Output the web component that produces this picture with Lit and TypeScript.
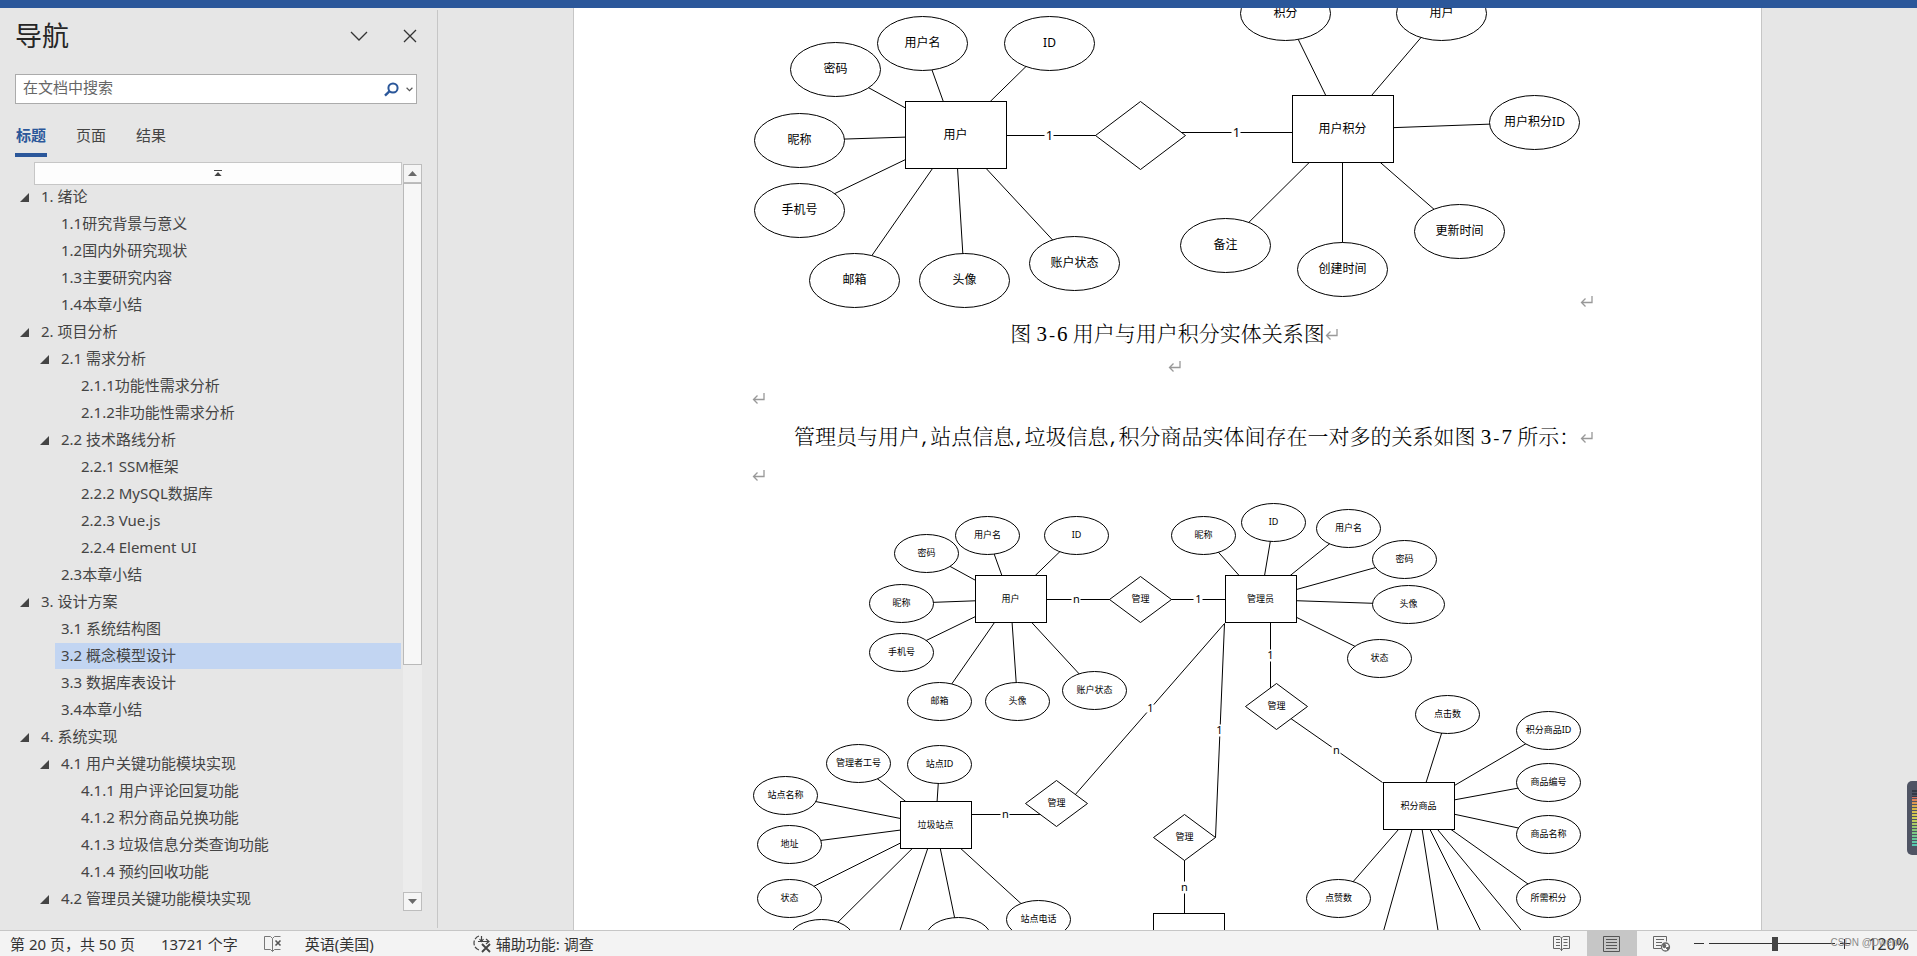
import { LitElement, html, svg, css, nothing } from "lit";
import { customElement, property, state } from "lit/decorators.js";
import { classMap } from "lit/directives/class-map.js";

type Point = [number, number];
interface Shape { kind: "oval" | "box" | "rhomb"; at: Point; text?: string; wide?: boolean }
interface Diagram {
  view: string;
  width: number;
  height: number;
  oval: Point;
  box: Point;
  rhomb: Point;
  shapes: Shape[];
  edges: [Point, Point][];
  marks: { at: Point; text: string; h?: number }[];
}

const oval = (x: number, y: number, text = "", wide = false): Shape => ({ kind: "oval", at: [x, y], text, wide });
const box = (x: number, y: number, text = ""): Shape => ({ kind: "box", at: [x, y], text });
const rhomb = (x: number, y: number, text = ""): Shape => ({ kind: "rhomb", at: [x, y], text });
const spokes = (center: Point, ovals: Shape[]): [Point, Point][] => ovals.map((o) => [center, o.at]);

const userAttrs = [
  oval(836, 69, "密码"), oval(923, 43, "用户名"), oval(1050, 43, "ID"), oval(800, 140, "昵称"),
  oval(800, 210, "手机号"), oval(855, 280, "邮箱"), oval(965, 280, "头像"), oval(1075, 263, "账户状态"),
];
const pointAttrs = [
  oval(1286, 13, "积分"), oval(1442, 13, "用户"), oval(1535, 122, "用户积分ID"),
  oval(1460, 231, "更新时间"), oval(1343, 269, "创建时间"), oval(1226, 245, "备注"),
];
const pointsDiagram: Diagram = {
  view: "753 8 828 300", width: 828, height: 300,
  oval: [45, 27], box: [101, 67], rhomb: [45, 34],
  shapes: [...userAttrs, ...pointAttrs, box(956, 135, "用户"), rhomb(1141, 135), box(1343, 129, "用户积分")],
  edges: [
    ...spokes([956, 135], userAttrs), ...spokes([1343, 129], pointAttrs),
    [[956, 135], [1141, 135]], [[1160, 132], [1343, 132]],
  ],
  marks: [{ at: [1050, 135], text: "1" }, { at: [1237, 132], text: "1" }],
};

const memberAttrs = [
  oval(988, 535, "用户名"), oval(1077, 535, "ID"), oval(927, 553, "密码"), oval(902, 603, "昵称"),
  oval(902, 652, "手机号"), oval(940, 701, "邮箱"), oval(1018, 701, "头像"), oval(1095, 690, "账户状态"),
];
const adminAttrs = [
  oval(1204, 535, "昵称"), oval(1274, 522, "ID"), oval(1349, 528, "用户名"), oval(1405, 559, "密码"),
  oval(1409, 604, "头像", true), oval(1380, 658, "状态"),
];
const goodsAttrs = [
  oval(1448, 714, "点击数"), oval(1549, 730, "积分商品ID"), oval(1549, 782, "商品编号"),
  oval(1549, 834, "商品名称"), oval(1549, 898, "所需积分"), oval(1339, 898, "点赞数"),
];
const siteAttrs = [
  oval(859, 763, "管理者工号"), oval(940, 764, "站点ID"), oval(786, 795, "站点名称"), oval(790, 844, "地址"),
  oval(790, 898, "状态"), oval(822, 938), oval(959, 936), oval(1039, 919, "站点电话"),
];
const adminDiagram: Diagram = {
  view: "753 492 828 460", width: 828, height: 460,
  oval: [32, 19], box: [71, 47], rhomb: [31, 23],
  shapes: [
    ...memberAttrs, ...adminAttrs, ...goodsAttrs, ...siteAttrs,
    box(1011, 599, "用户"), box(1261, 599, "管理员"), box(1419, 806, "积分商品"), box(936, 825, "垃圾站点"),
    box(1189, 937), rhomb(1141, 599, "管理"), rhomb(1277, 706, "管理"), rhomb(1057, 803, "管理"), rhomb(1185, 837, "管理"),
  ],
  edges: [
    ...spokes([1011, 599], memberAttrs), ...spokes([1261, 599], adminAttrs),
    ...spokes([1419, 806], goodsAttrs), ...spokes([936, 825], siteAttrs),
    [[1419, 806], [1378, 952]], [[1419, 806], [1442, 952]], [[1419, 806], [1492, 952]], [[1419, 806], [1540, 952]],
    [[936, 825], [893, 952]],
    [[1011, 599], [1141, 599]], [[1141, 599], [1261, 599]],
    [[1271, 599], [1271, 700]], [[1277, 708], [1383, 782]],
    [[1225, 623], [1068, 803]], [[1225, 623], [1216, 837]],
    [[936, 814], [1057, 814]], [[1185, 837], [1185, 937]],
  ],
  marks: [
    { at: [1077, 599], text: "n" }, { at: [1199, 599], text: "1" }, { at: [1151, 708], text: "1" },
    { at: [1220, 730], text: "1", h: 12 }, { at: [1271, 655], text: "1", h: 12 }, { at: [1337, 750], text: "n" },
    { at: [1006, 814], text: "n" }, { at: [1185, 887], text: "n", h: 12 },
  ],
};

@customElement("er-diagram")
class ErDiagram extends LitElement {
  @property({ attribute: false }) data!: Diagram;
  @property({ type: Boolean, reflect: true }) small = false;

  static styles = css`
    :host { display: block; font: 400 12px/16px "Noto Sans", "Noto Sans CJK SC", sans-serif; }
    :host([small]) { font-size: 9px; }
    svg { display: block; max-width: 100%; height: auto; overflow: visible; }
    .line { stroke: #000; stroke-width: 1; }
    .shape { fill: #fff; stroke: #000; stroke-width: 1; }
    .gap { fill: #fff; }
    .label { text-anchor: middle; dominant-baseline: central; fill: #000; }
    .mark { font-size: 13px; }
    :host([small]) .mark { font-size: 11px; }
  `;

  private shape(s: Shape) {
    const d = this.data;
    const [x, y] = s.at;
    let figure;
    if (s.kind === "oval") {
      figure = svg`<ellipse class="shape" cx=${x} cy=${y} rx=${s.wide ? d.oval[0] + 4 : d.oval[0]} ry=${d.oval[1]} />`;
    } else if (s.kind === "box") {
      const [w, h] = d.box;
      figure = svg`<rect class="shape" x=${x - (w - 1) / 2} y=${y - (h + 1) / 2} width=${w} height=${h} />`;
    } else {
      const [w, h] = d.rhomb;
      figure = svg`<polygon class="shape" points="${x - w},${y} ${x},${y - h} ${x + w},${y} ${x},${y + h}" />`;
    }
    return svg`${figure}${s.text ? svg`<text class="label" x=${x} y=${y - 1}>${s.text}</text>` : nothing}`;
  }

  render() {
    const d = this.data;
    return html`
      <svg viewBox=${d.view} width=${d.width} height=${d.height} role="img" aria-label="实体关系图">
        <g transform="translate(0.5 0.5)">
          ${d.edges.map(([a, b]) => svg`<line class="line" x1=${a[0]} y1=${a[1]} x2=${b[0]} y2=${b[1]} />`)}
          ${d.shapes.map((s) => this.shape(s))}
          ${d.marks.map((m) => svg`
            <rect class="gap" x=${m.at[0] - 5} y=${m.at[1] - (m.h ?? 8) / 2} width="9" height=${m.h ?? 8} />
            <text class="label mark" x=${m.at[0]} y=${m.at[1] - 1}>${m.text}</text>`)}
        </g>
      </svg>`;
  }
}

interface Heading { level: number; text: string; open?: boolean }
const headings: Heading[] = [
  { level: 1, text: "1. 绪论", open: true },
  { level: 2, text: "1.1研究背景与意义" },
  { level: 2, text: "1.2国内外研究现状" },
  { level: 2, text: "1.3主要研究内容" },
  { level: 2, text: "1.4本章小结" },
  { level: 1, text: "2. 项目分析", open: true },
  { level: 2, text: "2.1 需求分析", open: true },
  { level: 3, text: "2.1.1功能性需求分析" },
  { level: 3, text: "2.1.2非功能性需求分析" },
  { level: 2, text: "2.2 技术路线分析", open: true },
  { level: 3, text: "2.2.1 SSM框架" },
  { level: 3, text: "2.2.2 MySQL数据库" },
  { level: 3, text: "2.2.3 Vue.js" },
  { level: 3, text: "2.2.4 Element UI" },
  { level: 2, text: "2.3本章小结" },
  { level: 1, text: "3. 设计方案", open: true },
  { level: 2, text: "3.1 系统结构图" },
  { level: 2, text: "3.2 概念模型设计" },
  { level: 2, text: "3.3 数据库表设计" },
  { level: 2, text: "3.4本章小结" },
  { level: 1, text: "4. 系统实现", open: true },
  { level: 2, text: "4.1 用户关键功能模块实现", open: true },
  { level: 3, text: "4.1.1 用户评论回复功能" },
  { level: 3, text: "4.1.2 积分商品兑换功能" },
  { level: 3, text: "4.1.3 垃圾信息分类查询功能" },
  { level: 3, text: "4.1.4 预约回收功能" },
  { level: 2, text: "4.2 管理员关键功能模块实现", open: true },
];

@customElement("nav-pane")
class NavPane extends LitElement {
  @state() private tab = "标题";
  @state() private current = 17;

  static styles = css`
    :host {
      display: flex; flex-direction: column; box-sizing: border-box; width: 438px; height: 100%;
      padding: 0 0 2px; color: #444;
      font: 15px/27px "Noto Sans", "Noto Sans CJK SC", sans-serif;
    }
    .inner { flex: 1; min-height: 0; display: flex; flex-direction: column; margin-top: 2px; border-right: 1px solid #c6c6c6; }
    button { font: inherit; color: inherit; background: none; border: 0; padding: 0; margin: 0; }
    svg { display: block; }
    .head { display: flex; align-items: center; box-sizing: border-box; padding: 4px 20px 0 15px; height: 48px; }
    h2 { flex: 1; margin: 0; font-size: 27px; line-height: 40px; font-weight: 400; color: #262626; }
    .head .tool { margin-left: 35px; color: #333; }
    .search { display: flex; align-items: center; height: 28px; margin: 16px 20px 0 15px; border: 1px solid #ababab; background: #fff; }
    .search input { flex: 1; min-width: 0; height: 26px; padding: 0 0 3px 7px; border: 0; outline: 0; background: none; font: inherit; color: #444; box-sizing: border-box; }
    .search input::placeholder { color: #666; opacity: 1; }
    .search .go { margin-right: 7px; }
    .search .more { margin-right: 3px; }
    .tabs { display: flex; gap: 28px; padding: 17px 15px 0; }
    .tab { box-sizing: border-box; width: 32px; height: 36px; padding-bottom: 4px; border-bottom: 4px solid transparent; line-height: 28px; white-space: nowrap; }
    .tab.on { color: #2b579a; font-weight: 700; border-color: #2b579a; }
    .outline { flex: 1; min-height: 0; display: flex; gap: 1px; margin: 5px 15px 17px 0; }
    .list { flex: 1; min-width: 0; overflow: hidden; }
    .top { display: flex; justify-content: center; align-items: center; box-sizing: border-box; width: calc(100% - 34px); height: 23px; margin-left: 34px; border: 1px solid #c6c6c6; background: #fdfdfd; color: #444; }
    ul { list-style: none; margin: -1px 0 0; padding: 0 1px 0 0; }
    li { display: flex; align-items: flex-start; height: 27px; }
    li.l1 { padding-left: 14px; }
    li.l2 { padding-left: 34px; }
    li.l3 { padding-left: 54px; }
    .fold { flex: none; display: flex; align-items: center; justify-content: center; width: 21px; height: 26px; color: #444; }
    .item { flex: 1; height: 26px; line-height: 25px; padding-left: 6px; color: inherit; text-decoration: none; white-space: nowrap; }
    .item.on { background: #c2d5f2; }
    .scroll { display: flex; flex-direction: column; width: 19px; margin-top: 2px; background: #ececec; box-sizing: border-box; }
    .arrow { box-sizing: border-box; height: 19px; flex: none; display: flex; align-items: center; justify-content: center; border: 1px solid #bdbdbd; background: #f5f5f5; color: #6a6a6a; }
    .track { flex: 1; }
    .thumb { box-sizing: border-box; height: 68%; border: 1px solid #b9b9b9; background: #f7f7f7; }
  `;

  render() {
    return html`
      <div class="inner">
        <div class="head">
          <h2>导航</h2>
          <button class="tool" aria-label="任务窗格选项"><svg width="18" height="10" fill="none" stroke="currentColor" stroke-width="1.3"><path d="M1 1l8 8 8-8" /></svg></button>
          <button class="tool" aria-label="关闭"><svg width="14" height="14" fill="none" stroke="currentColor" stroke-width="1.3"><path d="M1 1l12 12M13 1L1 13" /></svg></button>
        </div>
        <div class="search">
          <input type="text" aria-label="在文档中搜索" placeholder="在文档中搜索" />
          <button class="go" aria-label="搜索"><svg width="15" height="15" fill="none" stroke="#2b579a"><circle cx="9" cy="6" r="4.6" stroke-width="2" /><path d="M5.6 9.2L1 13.6" stroke-width="2.4" /></svg></button>
          <button class="more" aria-label="搜索选项"><svg width="7" height="5" fill="none" stroke="#555" stroke-width="1.2"><path d="M.6.8l2.9 2.8L6.4.8" /></svg></button>
        </div>
        <div class="tabs" role="tablist">
          ${["标题", "页面", "结果"].map((t) => html`
            <button role="tab" class=${classMap({ tab: true, on: t === this.tab })} @click=${() => (this.tab = t)}>${t}</button>`)}
        </div>
        <div class="outline">
          <div class="list">
            <button class="top" aria-label="跳转到文档开头"><svg width="8" height="7" fill="currentColor"><path d="M0 0h8v1H0zM4 2l3.6 4H.4z" /></svg></button>
            <ul>
              ${headings.map((h, i) => html`
                <li class="l${h.level}">
                  ${h.open
                    ? html`<button class="fold" aria-label="折叠"><svg width="9" height="9" fill="currentColor"><path d="M9 0v9H0z" /></svg></button>`
                    : html`<span class="fold"></span>`}
                  <a href="#h${i}" class=${classMap({ item: true, on: i === this.current })}
                    @click=${(e: Event) => { e.preventDefault(); this.current = i; }}>${h.text}</a>
                </li>`)}
            </ul>
          </div>
          <div class="scroll">
            <button class="arrow" aria-label="向上滚动"><svg width="9" height="5" fill="currentColor"><path d="M4.5 0L9 5H0z" /></svg></button>
            <div class="track"><div class="thumb"></div></div>
            <button class="arrow" aria-label="向下滚动"><svg width="9" height="5" fill="currentColor"><path d="M0 0h9L4.5 5z" /></svg></button>
          </div>
        </div>
      </div>`;
  }
}

@customElement("status-bar")
class StatusBar extends LitElement {
  static styles = css`
    :host {
      position: relative; display: flex; align-items: stretch; box-sizing: border-box; height: 26px; overflow: hidden;
      border-top: 1px solid #c6c6c6; background: #f3f3f3; color: #333;
      font: 15px/26px "Noto Sans", "Noto Sans CJK SC", sans-serif; white-space: nowrap;
    }
    button { display: flex; align-items: center; gap: 4px; font: inherit; color: inherit; background: none; border: 0; padding: 0; margin: 0; }
    svg { display: block; }
    .left { display: flex; gap: 23px; padding-left: 10px; flex: 1; }
    .count { padding: 0 3px; }
    .access { margin-left: 76px; }
    .view { width: 50px; justify-content: center; }
    .view.on { background: #c6c6c6; }
    .zoom { display: flex; align-items: center; gap: 5px; margin-left: 7px; }
    .zoom .value { margin-left: 13px; font-size: 16px; padding-right: 8px; }
    input { appearance: none; width: 126px; height: 16px; margin: 0; background: linear-gradient(#333, #333) center / 100% 1px no-repeat; }
    input::-webkit-slider-thumb { appearance: none; width: 6px; height: 14px; background: #444; }
    .stamp { position: absolute; right: 14px; top: 5px; font: 10px/14px "Liberation Sans", sans-serif; color: #8a8a8a; }
  `;

  render() {
    return html`
      <div class="left">
        <button>第 20 页，共 50 页</button>
        <button class="count">13721 个字</button>
        <button aria-label="校对"><svg width="18" height="16" fill="none" stroke="#777"><path d="M8.5 2.5L6.5.5H.5v13h6l2 2 2-2h6M8.5 2.5v13M8.5 2.5l2-2h6" /><path d="M11.500 4.500l5 5M16.500 4.500l-5 5" stroke="#555" stroke-width="1.6" /></svg></button>
        <button>英语(美国)</button>
        <button class="access"><svg width="19" height="18" fill="none" stroke="#444" stroke-width="1.2"><path d="M6 1A7.400 7.400 0 0 0 6 15" stroke-dasharray="5 1.500" /><path d="M8.500 1v5M5 6.500h11M6.500 4l2 2.500 2-2.500M13 4l3 2.500-3 2.500" /><path d="M9 9l8 8M17 9l-8 8" stroke-width="1.900" /></svg>辅助功能: 调查</button>
      </div>
      <button class="view" aria-label="阅读视图"><svg width="18" height="16" fill="none" stroke="#666"><path d="M8.500 2L7 .500H.500v12H7L8.500 14.500 10 12.500h6.500V.500H10L8.500 2V15M3 3.500h4M3 6.500h4M3 9.500h4M10.500 3.500h4M10.500 6.500h4M10.500 9.500h4" /></svg></button>
      <button class="view on" aria-label="页面视图"><svg width="18" height="16" fill="none" stroke="#555"><path d="M.500.500h16v15H.500zM3 3.500h11M3 6.500h11M3 9.500h11M3 12.500h11" /></svg></button>
      <button class="view" aria-label="Web 版式视图"><svg width="18" height="16" fill="none" stroke="#666"><path d="M8 12.500H.500V.500h13v5M3 3.500h8M3 6.500h6M3 9.500h5" /><circle cx="12.500" cy="11" r="4" fill="#fff" stroke-width="1.300" /><path d="M10 8l3 1-1 3-2-1zM13 12l3-1-1 3z" fill="#666" /></svg></button>
      <div class="zoom">
        <button aria-label="缩小"><svg width="10" height="10" stroke="#333"><path d="M0 4.500h10" /></svg></button>
        <input type="range" min="10" max="220" value="120" aria-label="显示比例" />
        <button aria-label="放大"><svg width="10" height="10" stroke="#333"><path d="M0 4.500h10M4.500 0v10" /></svg></button>
        <button class="value">120%</button>
      </div>
      <span class="stamp">CSDN @Dwenn</span>`;
  }
}

@customElement("app-root")
class AppRoot extends LitElement {
  static styles = css`
    :host { display: grid; grid-template-rows: 8px minmax(0, 1fr) auto; height: 100vh; overflow: hidden; background: #e6e6e6; }
    .band { background: #2b579a; }
    .work { position: relative; display: flex; min-height: 0; }
    .canvas { flex: 1; min-width: 0; display: flex; justify-content: center; overflow: hidden; padding-right: 20px; }
    .page {
      box-sizing: border-box; width: 1189px; padding: 0 165px 0 178px; overflow: hidden;
      background: #fff; border: solid #c6c6c6; border-width: 0 1px; color: #000;
      font: 300 21px/32px "SimSun", "Noto Serif CJK SC", "Noto Sans CJK SC", serif;
    }
    .figure { display: flex; align-items: flex-end; margin: 0 0 8px; }
    .figure.last { margin: 0; }
    p { margin: 0; height: 32px; white-space: nowrap; }
    .caption { text-align: center; }
    .body { height: 38px; padding: 4px 0 0 42px; line-height: 38px; }
    .tall { height: 38px; line-height: 38px; }
    .num { font-family: "Liberation Serif", serif; font-weight: 400; line-height: 1; }
    .punct { font: 17px/1 "Liberation Mono", monospace; }
    .ret { width: 13px; height: 12px; fill: none; stroke: #999; stroke-width: 1.3; }
    .gadget {
      position: absolute; right: 0; top: 773px; box-sizing: border-box; width: 10px; height: 74px; padding: 9px 0 8px 5px;
      border-radius: 5px 0 0 5px; background: #4f5464;
    }
    .meter {
      height: 100%;
      background: repeating-linear-gradient(transparent 0 2px, #4f5464 2px 3px),
        linear-gradient(#333845 12%, #e0705c 13%, #d9b44a 30%, #cfd055 50%, #86c878 70%, #4fc9b8);
    }
  `;

  private ret() {
    return html`<svg class="ret" viewBox="0 0 13 12" aria-hidden="true"><path d="M12 0v6.500H1.500M5.500 2.500l-4 4 4 4" /></svg>`;
  }

  private ref(a: number, b: number) {
    return html`<span class="num"> ${a}<span class="punct">-</span>${b} </span>`;
  }

  render() {
    const comma = html`<span class="punct">,</span>`;
    return html`
      <div class="band"></div>
      <div class="work">
        <nav-pane></nav-pane>
        <div class="canvas">
          <article class="page">
            <div class="figure"><er-diagram .data=${pointsDiagram}></er-diagram>${this.ret()}</div>
            <p class="caption">图${this.ref(3, 6)}用户与用户积分实体关系图${this.ret()}</p>
            <p class="caption">${this.ret()}</p>
            <p>${this.ret()}</p>
            <p class="body">管理员与用户${comma}站点信息${comma}垃圾信息${comma}积分商品实体间存在一对多的关系如图${this.ref(3, 7)}所示：${this.ret()}</p>
            <p class="tall">${this.ret()}</p>
            <div class="figure last"><er-diagram small .data=${adminDiagram}></er-diagram></div>
          </article>
        </div>
        <div class="gadget"><div class="meter"></div></div>
      </div>
      <status-bar></status-bar>`;
  }
}
